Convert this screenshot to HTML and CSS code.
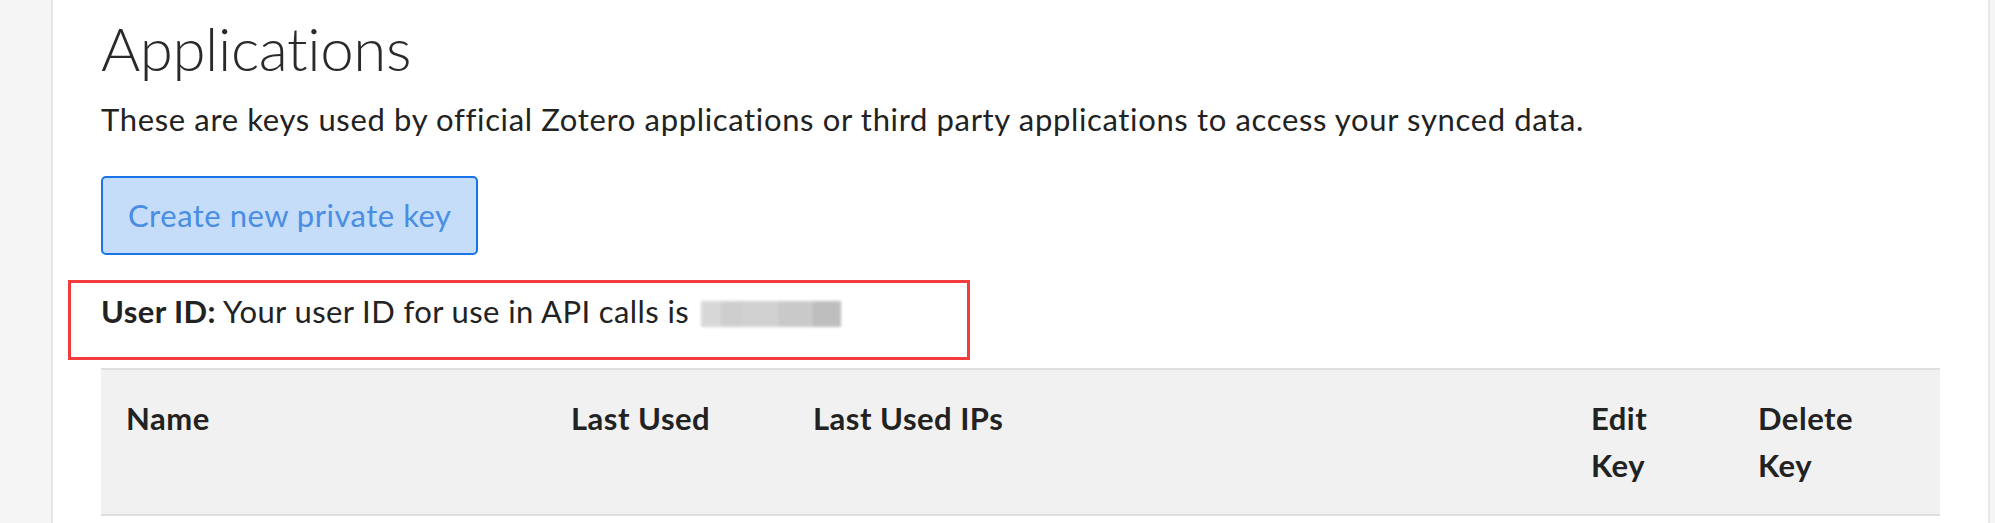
FILE: index.html
```html
<!DOCTYPE html>
<html lang="en">
<head>
<meta charset="utf-8">
<title>Applications</title>
<link rel="stylesheet" href="styles.css">
</head>
<body>
<div class="page">
  <div class="side side-left"></div>
  <main class="main">
    <h1 class="title">Applications</h1>
    <p class="lead">These are keys used by official Zotero applications or third party applications to access your synced data.</p>
    <button class="btn-create" type="button">Create new private key</button>
    <p class="userid"><strong>User ID:</strong> Your user ID for use in API calls is <span class="blurred"></span><span class="annot"></span></p>
    <div class="keys">
      <div class="keys-head">
        <div class="col col-name">Name</div>
        <div class="col col-used">Last Used</div>
        <div class="col col-ips">Last Used IPs</div>
        <div class="col col-edit">Edit Key</div>
        <div class="col col-del">Delete Key</div>
      </div>
    </div>
  </main>
  <div class="side side-right"></div>
</div>
</body>
</html>
```
FILE: styles.css
```css
html, body {
  margin: 0;
  padding: 0;
  background: #ffffff;
}
body {
  font-family: "Lato", "Noto Sans", sans-serif;
  color: #222222;
}
.page {
  display: flex;
  min-height: 523px;
}
.side {
  background: #f5f5f5;
  flex: none;
}
.side-left {
  width: 51px;
  border-right: 2px solid #e6e6e6;
}
.side-right {
  width: 5px;
  border-left: 2px solid #e8e8e8;
}
.main {
  flex: 1;
  padding: 0 48px;
  min-width: 0;
}
.title {
  margin: 12px 0 0 0;
  font-size: 60px;
  line-height: 72px;
  font-weight: 300;
  letter-spacing: -0.4px;
  color: #2a2a2a;
}
.lead {
  margin: 11.5px 0 0 0;
  font-size: 31px;
  line-height: 47px;
  letter-spacing: 0.65px;
  color: #222;
}
.btn-create {
  margin-top: 33.5px;
  display: block;
  height: 79px;
  padding: 0 25px;
  border: 2px solid #1a73e8;
  border-radius: 5px;
  background: #c5ddf9;
  color: #4a8de4;
  font-family: inherit;
  font-size: 31px;
  line-height: 47px;
  letter-spacing: 0.5px;
}
.userid {
  position: relative;
  margin: 32.5px 0 0 0;
  font-size: 31px;
  line-height: 47px;
  letter-spacing: 0.4px;
  color: #222;
}
.userid strong {
  font-weight: 700;
}
.blurred {
  display: inline-block;
  vertical-align: -4px;
  margin-left: 4px;
  width: 140px;
  height: 26px;
  background:
    linear-gradient(90deg, #d3d3d3 0 14%, #c9c9c9 14% 30%, #cdcdcd 30% 55%, #c4c4c4 55% 80%, #b7b7b7 80% 100%);
  filter: blur(1.5px);
  opacity: 0.9;
}
.annot {
  position: absolute;
  left: -33px;
  top: -7.5px;
  width: 896px;
  height: 74px;
  border: 3px solid #f23b3b;
  pointer-events: none;
}
.keys {
  margin-top: 33.5px;
  border-top: 2px solid #dedede;
  border-bottom: 2px solid #dedede;
  background: #f1f1f1;
}
.keys-head {
  display: grid;
  grid-template-columns: 445px 242px 778px 167px 1fr;
}
.col {
  padding: 24.5px 25px 25.5px 25px;
  font-size: 31px;
  line-height: 47px;
  font-weight: 700;
  letter-spacing: 0.5px;
  color: #222;
}
.col-edit, .col-del {
  padding-right: 60px;
}
```
